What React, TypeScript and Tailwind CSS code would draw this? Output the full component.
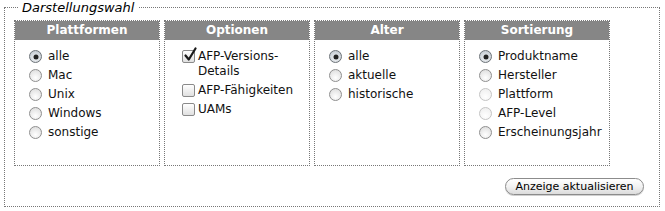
import React from "react";

type Opt = { label: string; checked?: boolean; disabled?: boolean };

const font = { fontFamily: '"DejaVu Sans", "Lucida Grande", Verdana, sans-serif' };

function Radio({ checked, disabled }: { checked?: boolean; disabled?: boolean }) {
  return (
    <span
      className={
        "relative inline-block w-[13px] h-[13px] shrink-0 rounded-full border " +
        (disabled
          ? "border-[#c4c4c4] bg-[radial-gradient(circle_at_50%_70%,#ffffff,#ececec)]"
          : checked
          ? "border-[#6d7378] bg-[radial-gradient(circle_at_50%_65%,#f4f6f8,#b8c0c8)]"
          : "border-[#8f8f8f] bg-[radial-gradient(circle_at_50%_70%,#ffffff,#d9d9d9)]")
      }
    >
      {checked && (
        <span className="absolute left-1/2 top-1/2 -translate-x-1/2 -translate-y-1/2 w-[5px] h-[5px] rounded-full bg-[#222]" />
      )}
    </span>
  );
}

function Checkbox({ checked }: { checked?: boolean }) {
  return (
    <span className="relative inline-block w-[13px] h-[13px] shrink-0 mt-[1px] rounded-[2px] border border-[#8a8a8a] bg-[linear-gradient(#ffffff,#e0e0e0)]">
      {checked && (
        <svg className="absolute -top-[4px] left-[1px]" width="13" height="15" viewBox="0 0 13 15">
          <path d="M1.5 8.5 L4.8 12.5 L11.5 1.5" fill="none" stroke="#1a1a1a" strokeWidth="2.2" strokeLinecap="round" strokeLinejoin="round" />
        </svg>
      )}
    </span>
  );
}

function Box({ title, children }: { title: string; children: React.ReactNode }) {
  return (
    <div className="w-[146px] h-[146px] border border-dotted border-[#777]">
      <div className="h-[19px] bg-[#868686] text-white font-bold text-[12px] leading-[19px] text-center">
        {title}
      </div>
      {children}
    </div>
  );
}

function RadioList({ items }: { items: Opt[] }) {
  return (
    <ul className="pt-[7px] pl-[14px]">
      {items.map((it) => (
        <li key={it.label} className="flex items-center gap-[6px] py-[2px] leading-[15px] text-[12px] text-[#111]">
          <Radio checked={it.checked} disabled={it.disabled} />
          <span>{it.label}</span>
        </li>
      ))}
    </ul>
  );
}

export default function App() {
  const plattformen: Opt[] = [
    { label: "alle", checked: true },
    { label: "Mac" },
    { label: "Unix" },
    { label: "Windows" },
    { label: "sonstige" },
  ];
  const optionen: Opt[] = [
    { label: "AFP-Versions-Details", checked: true },
    { label: "AFP-Fähigkeiten" },
    { label: "UAMs" },
  ];
  const alter: Opt[] = [{ label: "alle", checked: true }, { label: "aktuelle" }, { label: "historische" }];
  const sortierung: Opt[] = [
    { label: "Produktname", checked: true },
    { label: "Hersteller" },
    { label: "Plattform", disabled: true },
    { label: "AFP-Level", disabled: true },
    { label: "Erscheinungsjahr" },
  ];

  return (
    <div className="w-[665px] h-[211px] bg-white" style={font}>
      <fieldset className="ml-[4px] w-[656px] border border-dotted border-[#777]">
        <legend className="ml-[13px] px-[4px] italic text-[13px] leading-[15px] text-black">
          Darstellungswahl
        </legend>
        <div className="flex gap-1 pl-[9px] pt-[5px]">
          <Box title="Plattformen">
            <RadioList items={plattformen} />
          </Box>
          <Box title="Optionen">
            <ul className="pt-[7px] pl-[17px] pr-[4px]">
              {optionen.map((it) => (
                <li key={it.label} className="flex items-start gap-[3px] py-[2px] leading-[15px] text-[12px] text-[#111]">
                  <Checkbox checked={it.checked} />
                  <span>{it.label}</span>
                </li>
              ))}
            </ul>
          </Box>
          <Box title="Alter">
            <RadioList items={alter} />
          </Box>
          <Box title="Sortierung">
            <RadioList items={sortierung} />
          </Box>
        </div>
        <div className="flex justify-end pr-[15px] pt-[12px] pb-[11px]">
          <button className="h-[17px] w-[139px] rounded-full border border-[#8c8c8c] bg-[linear-gradient(#ffffff,#f2f2f2_50%,#dcdcdc)] text-[11px] leading-[15px] text-black shadow-[0_1px_0_#d0d0d0]">
            Anzeige aktualisieren
          </button>
        </div>
      </fieldset>
    </div>
  );
}
